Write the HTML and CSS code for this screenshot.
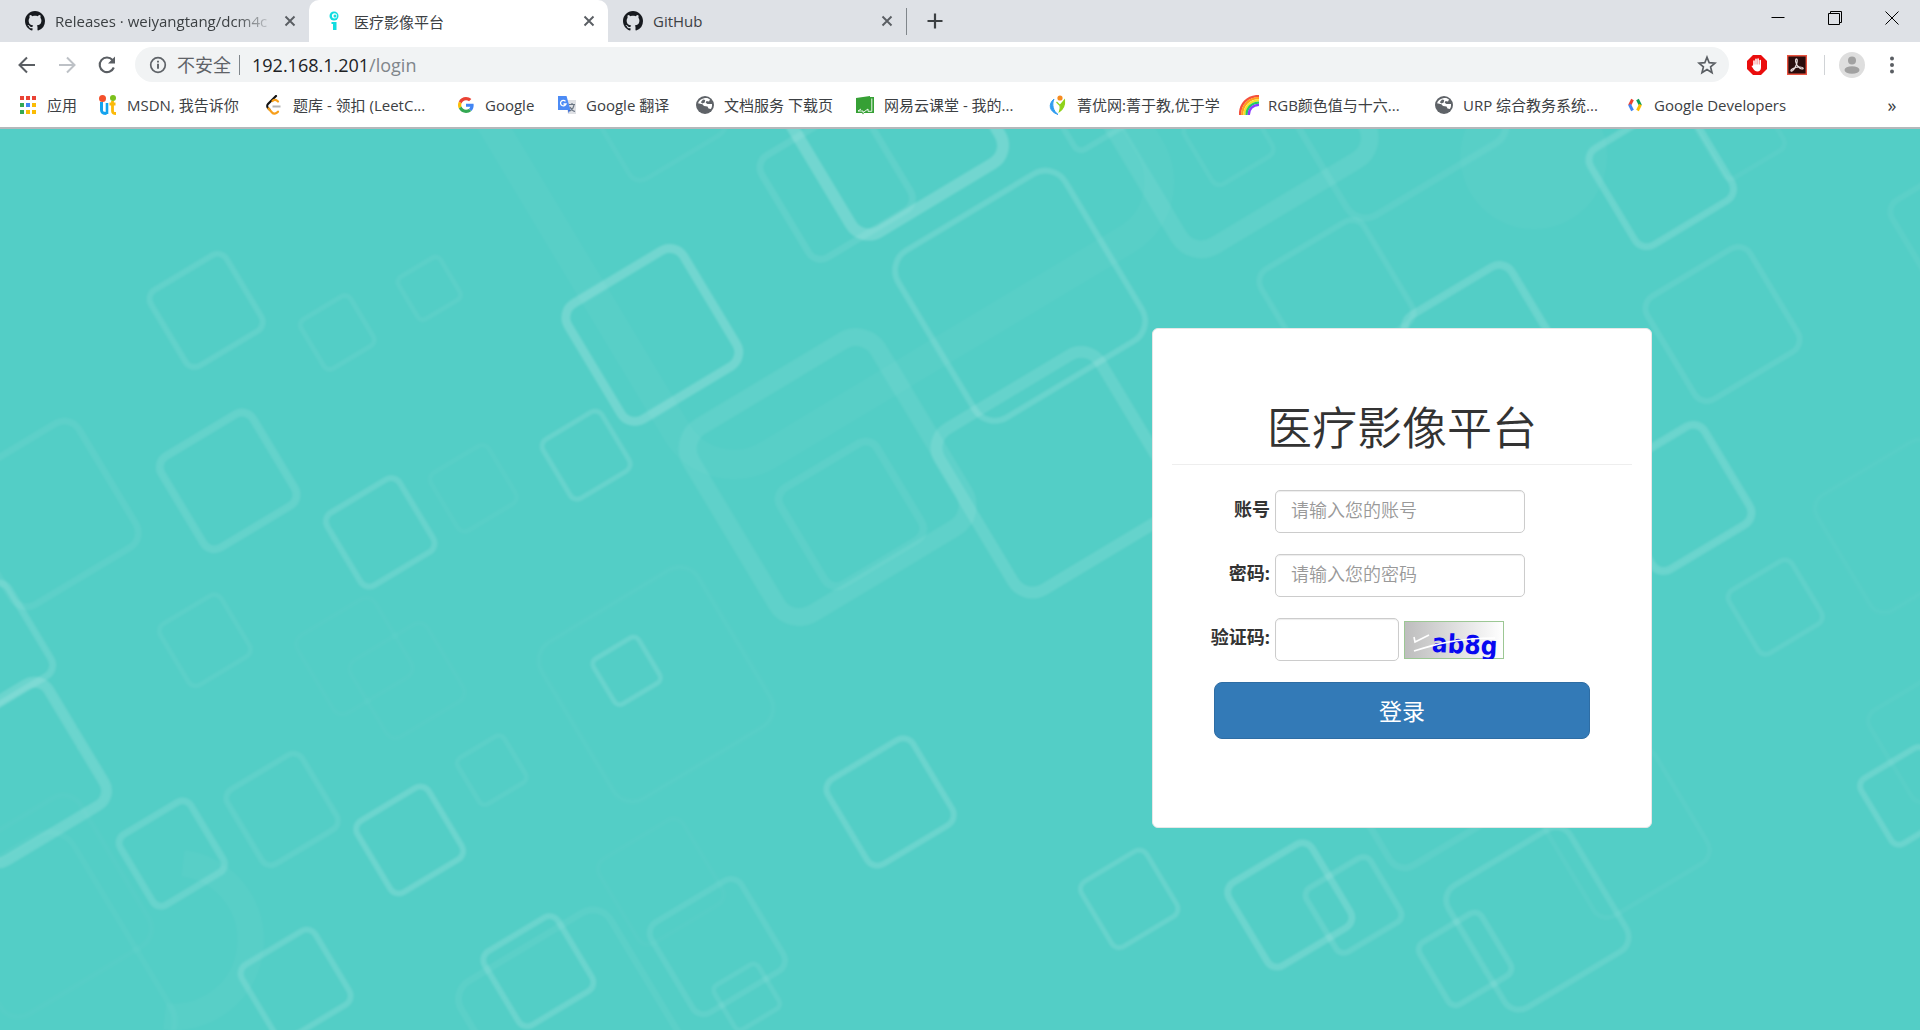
FILE: index.html
```html
<!DOCTYPE html>
<html lang="zh-CN">
<head>
<meta charset="utf-8">
<meta name="viewport" content="width=device-width, initial-scale=1">
<title>医疗影像平台</title>
<link rel="stylesheet" href="styles.css">
</head>
<body>
<svg class="defs" aria-hidden="true">
  <defs>
    <symbol id="github" viewBox="0 0 16 16"><path fill="#171a1f" d="M8 0C3.58 0 0 3.58 0 8c0 3.54 2.29 6.53 5.47 7.59.4.07.55-.17.55-.38 0-.19-.01-.82-.01-1.49-2.01.37-2.53-.49-2.69-.94-.09-.23-.48-.94-.82-1.13-.28-.15-.68-.52-.01-.53.63-.01 1.08.58 1.23.82.72 1.21 1.87.87 2.33.66.07-.52.28-.87.51-1.07-1.78-.2-3.64-.89-3.64-3.95 0-.87.31-1.59.82-2.15-.08-.2-.36-1.02.08-2.12 0 0 .67-.21 2.2.82.64-.18 1.32-.27 2-.27s1.36.09 2 .27c1.53-1.04 2.2-.82 2.2-.82.44 1.1.16 1.92.08 2.12.51.56.82 1.27.82 2.15 0 3.07-1.87 3.75-3.65 3.95.29.25.54.73.54 1.48 0 1.07-.01 1.93-.01 2.2 0 .21.15.46.55.38A8.01 8.01 0 0 0 16 8c0-4.42-3.58-8-8-8z"/></symbol>
    <symbol id="cross" viewBox="0 0 12 12"><path d="M1.500 1.500l9 9M10.500 1.500l-9 9" fill="none" stroke="#5a5e63" stroke-width="1.900"/></symbol>
    <symbol id="globe" viewBox="0 0 20 20"><circle cx="10" cy="10" r="9" fill="#5f6368"/><path d="M9 3.300c2.500-.8 4.500-.3 6 1.200l-1 2-2.500-.4-.8 1.700 1.800 1.200H17c.3 2-.2 3.800-1.200 5l-2.300-.4-1-2.200-3.500-.4-1.600-1.800L3 8.200C3.800 5.800 6 4 9 3.300z" fill="#fff"/><path d="M8 4.500l2.200.4-.5 2.600-2.200 1-1.700-1.300zM4 11.500l3 .8 1.800 2.200-.8 2C5.800 15.800 4.500 14 4 11.500z" fill="#5f6368"/></symbol>
    <rect id="tile" x="-50" y="-50" width="100" height="100" rx="12" fill="none" stroke="#fff" vector-effect="non-scaling-stroke"/>
  </defs>
</svg>

<header class="browser">
  <div class="tabstrip">
    <div class="tab">
      <svg class="icon"><use href="#github"/></svg>
      <span class="tab-title faded">Releases · weiyangtang/dcm4c</span>
      <button class="tab-close" aria-label="关闭"><svg><use href="#cross"/></svg></button>
    </div>
    <div class="tab active">
      <svg class="icon" viewBox="0 0 20 20"><circle cx="10" cy="5" r="4.500" fill="#12dce0"/><circle cx="10.500" cy="4.800" r="2.600" fill="#fff"/><circle cx="11" cy="5" r="1.500" fill="#12dce0"/><path d="M7.500 11h5v8h-3.500v-6h-1.500z" fill="#12dce0"/></svg>
      <span class="tab-title">医疗影像平台</span>
      <button class="tab-close" aria-label="关闭"><svg><use href="#cross"/></svg></button>
    </div>
    <div class="tab last">
      <svg class="icon"><use href="#github"/></svg>
      <span class="tab-title">GitHub</span>
      <button class="tab-close" aria-label="关闭"><svg><use href="#cross"/></svg></button>
    </div>
    <button class="new-tab" aria-label="新标签页"><svg viewBox="0 0 16 16"><path d="M8 .5v15M.5 8h15" stroke="#3c4043" stroke-width="2.200"/></svg></button>
    <div class="window-controls">
      <button aria-label="最小化"><svg viewBox="0 0 14 14"><path d="M.5 6.500h13" stroke="#000"/></svg></button>
      <button aria-label="还原"><svg viewBox="0 0 14 14"><path d="M.5 2.500h11v11h-11zM2.500 2.500v-2h11v11h-2" fill="none" stroke="#000"/></svg></button>
      <button aria-label="关闭窗口"><svg viewBox="0 0 14 14"><path d="M.5.5l13 13M13.500.5l-13 13" stroke="#000"/></svg></button>
    </div>
  </div>

  <div class="toolbar">
    <button class="nav" aria-label="后退"><svg viewBox="0 0 20 20"><path d="M18 10H3M10 2.500L2.500 10l7.500 7.500" fill="none" stroke="#5a5e63" stroke-width="2"/></svg></button>
    <button class="nav" aria-label="前进"><svg viewBox="0 0 20 20"><path d="M2 10h15M10 2.500l7.500 7.500-7.500 7.500" fill="none" stroke="#bdc1c6" stroke-width="2"/></svg></button>
    <button class="nav" aria-label="重新加载"><svg viewBox="0 0 20 20"><path d="M16.800 12.500A7.300 7.300 0 1 1 15.500 5" fill="none" stroke="#5a5e63" stroke-width="2.100"/><path d="M18 1.500v7h-7z" fill="#5a5e63"/></svg></button>
    <div class="omnibox">
      <svg class="info" viewBox="0 0 18 18"><circle cx="9" cy="9" r="7.300" fill="none" stroke="#5f6368" stroke-width="1.700"/><path d="M9 7.800v5M9 4.700v1.900" stroke="#5f6368" stroke-width="1.900"/></svg>
      <span class="insecure">不安全</span>
      <span class="omni-sep"></span>
      <span class="url">192.168.1.201<span class="path">/login</span></span>
      <button class="star" aria-label="收藏"><svg viewBox="0 0 20 20"><path d="M10 2.200l2.200 5.500 5.900.4-4.500 3.800 1.400 5.800-5-3.200-5 3.200 1.400-5.800L1.900 8.100l5.900-.4z" fill="none" stroke="#5a5e63" stroke-width="1.700"/></svg></button>
    </div>
    <div class="extensions">
      <button aria-label="广告拦截"><svg viewBox="0 0 20 20"><path d="M6 0h8l6 6v8l-6 6H6l-6-6V6z" fill="#ea0d0d"/><path d="M7 11V6M9 10V4.200M11.100 10V4M13.200 11V5.500" stroke="#fff" stroke-width="1.600" stroke-linecap="round"/><path d="M6.200 9.500H14v3c0 2.600-1.500 4-3.600 4-1.900 0-3-1-4-2.500L4.500 11l1-.6.7.6z" fill="#fff"/></svg></button>
      <button aria-label="Acrobat"><svg viewBox="0 0 20 20"><path d="M.7.700h18.600v18.600H.7z" fill="#2a0c0c" stroke="#e8523f" stroke-width="1.400"/><path d="M9 4c2-.5 1.200 3.500.3 5.800C8.200 12.800 5.500 17 4 16c-1.200-1.500 5-4.200 9-4 3.500.2 4 2.200 2 2-3-.3-6-5-6.400-7.500C8.500 5 8.500 4.300 9 4z" fill="none" stroke="#e8dada" stroke-width="1.200"/></svg></button>
      <span class="tool-sep"></span>
      <button aria-label="用户"><svg class="avatar" viewBox="0 0 26 26"><circle cx="13" cy="13" r="13" fill="#dedede"/><circle cx="13" cy="8.500" r="4" fill="#a1a1a1"/><ellipse cx="13" cy="18" rx="7.500" ry="3.800" fill="#a1a1a1"/></svg></button>
      <button aria-label="菜单"><svg viewBox="0 0 20 20"><g fill="#5a5e63"><circle cx="10" cy="3.500" r="2"/><circle cx="10" cy="10" r="2"/><circle cx="10" cy="16.500" r="2"/></g></svg></button>
    </div>
  </div>

  <nav class="bookmarks">
    <a href="#"><svg class="icon" viewBox="0 0 20 20"><path d="M2 1h4v4H2zM8 1h4v4H8zM14 1h4v4h-4z" fill="#ea4335"/><path d="M2 8h4v4H2zM2 15h4v4H2z" fill="#34a853"/><path d="M8 8h4v4H8z" fill="#4285f4"/><path d="M14 8h4v4h-4zM8 15h4v4H8zM14 15h4v4h-4z" fill="#fbbc05"/></svg>应用</a>
    <a href="#"><svg class="icon" viewBox="0 0 20 20"><circle cx="4.500" cy="3.500" r="3.500" fill="#f4512c"/><circle cx="15" cy="3" r="3" fill="#7cc11c"/><path d="M3.500 7v8c0 3 1.500 3.500 5 3.500" fill="none" stroke="#15a3ee" stroke-width="3"/><path d="M9 8v11" stroke="#15a3ee" stroke-width="2.600"/><path d="M14.500 6v10c0 2 1 2.500 3.500 2.500M11.500 9h6" fill="none" stroke="#fbba09" stroke-width="2.800"/></svg>MSDN, 我告诉你</a>
    <a href="#"><svg class="icon" viewBox="0 0 20 20"><path d="M12 1L4 9c-1 1-1 3 0 4l1.500 1.500" fill="none" stroke="#111" stroke-width="2.200" stroke-linecap="round"/><path d="M14 6.500c-2-2-4-2-5.500-.5M4.500 13.500l3.500 4c1.500 1.700 4 1.500 6-.8" fill="none" stroke="#f79f1b" stroke-width="2.200" stroke-linecap="round"/><path d="M8.500 11.500h8" stroke="#b3b3b3" stroke-width="2"/></svg>题库 - 领扣 (LeetC...</a>
    <a href="#"><svg class="icon" viewBox="-6 -6 60 60"><path fill="#EA4335" d="M24 9.500c3.540 0 6.710 1.220 9.210 3.600l6.850-6.850C35.900 2.380 30.470 0 24 0 14.620 0 6.510 5.380 2.560 13.220l7.980 6.190C12.430 13.720 17.740 9.500 24 9.500z"/><path fill="#4285F4" d="M46.980 24.550c0-1.570-.15-3.090-.38-4.550H24v9.020h12.940c-.58 2.960-2.260 5.480-4.780 7.180l7.730 6c4.510-4.180 7.090-10.360 7.090-17.650z"/><path fill="#FBBC05" d="M10.530 28.590c-.48-1.450-.76-2.990-.76-4.590s.27-3.140.76-4.590l-7.980-6.190C.92 16.460 0 20.120 0 24s.92 7.540 2.560 10.780l7.970-6.190z"/><path fill="#34A853" d="M24 48c6.480 0 11.930-2.130 15.890-5.810l-7.730-6c-2.150 1.450-4.920 2.300-8.160 2.300-6.260 0-11.570-4.220-13.470-9.910l-7.980 6.190C6.510 42.620 14.620 48 24 48z"/></svg>Google</a>
    <a href="#"><svg class="icon" viewBox="0 0 20 20"><path d="M8 5h11v14h-8z" fill="#dfe1e5"/><path d="M1 1h8.500l4 14H1z" fill="#4c8bf5"/><path d="M11 15h2.500l-2 3z" fill="#3367d6"/><path d="M8.500 6.300A2.800 2.800 0 1 0 9 9H6.500" fill="none" stroke="#fff" stroke-width="1.300"/><path d="M12 9.500h6M15 8v1.500M17 10c-.5 3-2 5-4 6M13 12c1 2 3 4 5 4.500" fill="none" stroke="#6b7683" stroke-width="1.200"/></svg>Google 翻译</a>
    <a href="#"><svg class="icon"><use href="#globe"/></svg>文档服务 下载页</a>
    <a href="#"><svg class="icon" viewBox="0 0 20 20"><path d="M1 3l14-2v1h4v16H9l-1 1.500L7 18H1z" fill="#36a035"/><path d="M16.800 3.500v12.800H13V14l-5 3.500V16H3l3-2" fill="none" stroke="#fff" stroke-width=".9"/></svg>网易云课堂 - 我的...</a>
    <a href="#"><svg class="icon" viewBox="0 0 20 20"><circle cx="12" cy="3" r="2.600" fill="#f68b1f"/><path d="M6 4C0 9 1 16.500 10 19.500 5 16 3.500 9 6 4z" fill="#2f9df0" stroke="#2f9df0"/><path d="M8.500 7l3.500 3.500 4.500-5.500c.5 5-1.500 9-5 11.500 1-3 1-4.500.5-6" fill="#8fd21a" stroke="#8fd21a" stroke-width="1.200"/></svg>菁优网:菁于教,优于学</a>
    <a href="#"><svg class="icon" viewBox="0 0 20 20"><g fill="none" stroke-width="2.300"><path d="M1 20C1 9 8 1 20 1" stroke="#f4503c"/><path d="M3.200 20C3.200 10 10 3.200 20 3.200" stroke="#ffa01c"/><path d="M5.400 20C5.400 12 11.500 5.400 20 5.400" stroke="#f4e325"/><path d="M7.600 20c0-7 5-12.400 12.400-12.400" stroke="#25cc63"/><path d="M9.800 20c0-6 4-10.200 10.200-10.200" stroke="#8b3dff"/></g></svg>RGB颜色值与十六...</a>
    <a href="#"><svg class="icon"><use href="#globe"/></svg>URP 综合教务系统...</a>
    <a href="#"><svg class="icon" viewBox="0 0 20 20"><g fill="none" stroke-width="2.900"><path d="M7.500 4.500L4.500 10.500" stroke="#ea4335"/><path d="M4.500 9.500l3 6" stroke="#4285f4"/><path d="M12.500 4.500l3 6" stroke="#0f9d58"/><path d="M15.500 9.500l-3 6" stroke="#fbbc05"/></g></svg>Google Developers</a>
    <button class="more" aria-label="更多书签">»</button>
  </nav>
</header>

<main class="page">
  <svg class="backdrop" viewBox="0 106 1568 735" preserveAspectRatio="xMidYMin slice" aria-hidden="true">
    <g class="haze">
      <circle cx="1252" cy="128" r="60" fill="#fff" opacity=".03"/>
      <path d="M150 705a62 62 0 0 1-15 125" fill="none" stroke="#fff" stroke-width="22" opacity=".03"/>
      <use href="#tile" transform="translate(658 91) rotate(-31) scale(4.500)" stroke-width="30" opacity=".03"/>
      <use href="#tile" transform="translate(169 254) rotate(-31) scale(.72)" stroke-width="6" opacity=".09"/>
      <use href="#tile" transform="translate(276 272) rotate(-31) scale(.47)" stroke-width="5" opacity=".06"/>
      <use href="#tile" transform="translate(351 236) rotate(-31) scale(.4)" stroke-width="5" opacity=".05"/>
      <use href="#tile" transform="translate(38 420) rotate(-31) scale(1.180)" stroke-width="7" opacity=".06"/>
      <use href="#tile" transform="translate(187 393) rotate(-31) scale(.87)" stroke-width="8" opacity=".1"/>
      <use href="#tile" transform="translate(311 435) rotate(-31) scale(.69)" stroke-width="6" opacity=".12"/>
      <use href="#tile" transform="translate(387 399) rotate(-31) scale(.55)" stroke-width="5" opacity=".03"/>
      <use href="#tile" transform="translate(479 372) rotate(-31) scale(.56)" stroke-width="5" opacity=".12"/>
      <use href="#tile" transform="translate(533 274) rotate(-31) scale(1.100)" stroke-width="9" opacity=".18"/>
      <use href="#tile" transform="translate(728 101) rotate(-31) scale(1.420)" stroke-width="12" opacity=".18"/>
      <use href="#tile" transform="translate(683 150) rotate(-31) scale(.97)" stroke-width="7" opacity=".08"/>
      <use href="#tile" transform="translate(833 242) rotate(-31) scale(1.590)" stroke-width="6" opacity=".13"/>
      <use href="#tile" transform="translate(676 390) rotate(-31) scale(1.780)" stroke-width="18" opacity=".07"/>
      <use href="#tile" transform="translate(695 420) rotate(-31) scale(.92)" stroke-width="8" opacity=".06"/>
      <use href="#tile" transform="translate(863 386) rotate(-31) scale(1.530)" stroke-width="12" opacity=".11"/>
      <use href="#tile" transform="translate(512 548) rotate(-31) scale(.43)" stroke-width="5" opacity=".13"/>
      <use href="#tile" transform="translate(727 655) rotate(-31) scale(.81)" stroke-width="6" opacity=".14"/>
      <use href="#tile" transform="translate(922 734) rotate(-31) scale(.62)" stroke-width="5" opacity=".12"/>
      <use href="#tile" transform="translate(586 773) rotate(-31) scale(.86)" stroke-width="6" opacity=".08"/>
      <use href="#tile" transform="translate(610 814) rotate(-31) scale(.42)" stroke-width="5" opacity=".08"/>
      <use href="#tile" transform="translate(168 523) rotate(-31) scale(.58)" stroke-width="5" opacity=".05"/>
      <use href="#tile" transform="translate(-12 532) rotate(-31) scale(.87)" stroke-width="7" opacity=".12"/>
      <use href="#tile" transform="translate(14 631) rotate(-31) scale(1.150)" stroke-width="11" opacity=".14"/>
      <use href="#tile" transform="translate(141 697) rotate(-31) scale(.67)" stroke-width="7" opacity=".12"/>
      <use href="#tile" transform="translate(231 661) rotate(-31) scale(.71)" stroke-width="6" opacity=".07"/>
      <use href="#tile" transform="translate(335 686) rotate(-31) scale(.68)" stroke-width="6" opacity=".15"/>
      <use href="#tile" transform="translate(402 629) rotate(-31) scale(.44)" stroke-width="5" opacity=".05"/>
      <use href="#tile" transform="translate(242 804) rotate(-31) scale(.7)" stroke-width="6" opacity=".13"/>
      <use href="#tile" transform="translate(440 793) rotate(-31) scale(.7)" stroke-width="6" opacity=".14"/>
      <use href="#tile" transform="translate(466 834) rotate(-31) scale(1.420)" stroke-width="7" opacity=".05"/>
      <use href="#tile" transform="translate(290 536) rotate(-31) scale(.74)" stroke-width="5" opacity=".02"/>
      <use href="#tile" transform="translate(333 556) rotate(-31) scale(.73)" stroke-width="5" opacity=".02"/>
      <use href="#tile" transform="translate(536 559) rotate(-31) scale(1.490)" stroke-width="6" opacity=".022"/>
      <use href="#tile" transform="translate(540 720) rotate(-31) scale(.8)" stroke-width="5" opacity=".02"/>
      <use href="#tile" transform="translate(15 808) rotate(-31) scale(2)" stroke-width="6" opacity=".03"/>
      <use href="#tile" transform="translate(34 740) rotate(-31) scale(1.410)" stroke-width="6" opacity=".02"/>
      <use href="#tile" transform="translate(535 90) rotate(-31) scale(.9)" stroke-width="5" opacity=".04"/>
      <use href="#tile" transform="translate(1004 90) rotate(-31) scale(1.780)" stroke-width="18" opacity=".07"/>
      <use href="#tile" transform="translate(1003 115) rotate(-31) scale(.57)" stroke-width="5" opacity=".05"/>
      <use href="#tile" transform="translate(890 88) rotate(-31) scale(.55)" stroke-width="6" opacity=".08"/>
      <use href="#tile" transform="translate(1091 243) rotate(-31) scale(.98)" stroke-width="6" opacity=".07"/>
      <use href="#tile" transform="translate(1134 83) rotate(-31) scale(1.490)" stroke-width="7" opacity=".06"/>
      <use href="#tile" transform="translate(1211 281) rotate(-31) scale(1)" stroke-width="8" opacity=".14"/>
      <use href="#tile" transform="translate(1356 143) rotate(-31) scale(.92)" stroke-width="7" opacity=".14"/>
      <use href="#tile" transform="translate(1406 265) rotate(-31) scale(.98)" stroke-width="6" opacity=".08"/>
      <use href="#tile" transform="translate(1420 110) rotate(-31) scale(.57)" stroke-width="5" opacity=".04"/>
      <use href="#tile" transform="translate(1600 185) rotate(-31) scale(.89)" stroke-width="6" opacity=".05"/>
      <use href="#tile" transform="translate(1370 407) rotate(-31) scale(.93)" stroke-width="8" opacity=".14"/>
      <use href="#tile" transform="translate(1449 496) rotate(-31) scale(.6)" stroke-width="5" opacity=".08"/>
      <use href="#tile" transform="translate(1558 650) rotate(-31) scale(.62)" stroke-width="6" opacity=".14"/>
      <use href="#tile" transform="translate(1580 600) rotate(-31) scale(.86)" stroke-width="5" opacity=".03"/>
      <use href="#tile" transform="translate(1552 430) rotate(-31) scale(1.100)" stroke-width="6" opacity=".025"/>
      <use href="#tile" transform="translate(1053 739) rotate(-31) scale(.79)" stroke-width="7" opacity=".15"/>
      <use href="#tile" transform="translate(1105 739) rotate(-31) scale(.61)" stroke-width="6" opacity=".1"/>
      <use href="#tile" transform="translate(1196 783) rotate(-31) scale(.59)" stroke-width="6" opacity=".1"/>
      <use href="#tile" transform="translate(1255 750) rotate(-31) scale(1.160)" stroke-width="6" opacity=".1"/>
      <use href="#tile" transform="translate(1162 633) rotate(-31) scale(1.180)" stroke-width="7" opacity=".06"/>
      <use href="#tile" transform="translate(1326 680) rotate(-31) scale(1.080)" stroke-width="5" opacity=".04"/>
    </g>
  </svg>

  <section class="card">
    <h1>医疗影像平台</h1>
    <form>
      <div class="row">
        <label for="account">账号</label>
        <input id="account" class="field" type="text" placeholder="请输入您的账号">
      </div>
      <div class="row">
        <label for="password">密码:</label>
        <input id="password" class="field" type="password" placeholder="请输入您的密码">
      </div>
      <div class="row">
        <label for="code">验证码:</label>
        <input id="code" class="field short" type="text">
        <svg class="captcha" viewBox="0 0 100 38" role="img" aria-label="验证码图片">
          <defs><linearGradient id="fade"><stop offset="0" stop-color="#bdbdbd"/><stop offset="1" stop-color="#fff"/></linearGradient></defs>
          <rect x=".5" y=".5" width="99" height="37" fill="url(#fade)" stroke="#9cc794"/>
          <text class="captcha-text" x="28" y="32" transform="rotate(3 50 20)">ab8g</text>
          <path d="M10 16l1 5 14-7M10 30C32 23 55 17 91 17" fill="none" stroke="#fff" stroke-width="1.600"/>
        </svg>
      </div>
      <button class="submit" type="button">登录</button>
    </form>
  </section>
</main>
</body>
</html>
```
FILE: styles.css
```css
* {
  box-sizing: border-box;
}

body {
  margin: 0;
  min-height: 100vh;
  display: flex;
  flex-direction: column;
  font-family: "Open Sans", "Noto Sans CJK SC", sans-serif;
  font-size: 15px;
  color: #3c4043;
}

button {
  margin: 0;
  padding: 0;
  border: 0;
  background: none;
  font: inherit;
  color: inherit;
}

a {
  color: inherit;
  text-decoration: none;
}

.defs {
  position: absolute;
  width: 0;
  height: 0;
}

.icon {
  width: 20px;
  height: 20px;
  flex: none;
}

/* Browser window */

.browser {
  background: #fff;
  border-bottom: 2px solid #b4b8bb;
}

.tabstrip {
  display: flex;
  height: 42px;
  padding-left: 10px;
  background: #dee1e6;
}

.tab {
  display: flex;
  align-items: center;
  gap: 10px;
  width: 299px;
  padding: 0 13px 0 15px;
}

.tab.active {
  background: #fff;
  border-radius: 10px 10px 0 0;
}

.tab.last {
  border-right: 1px solid transparent;
  border-image: linear-gradient(transparent 9px, #80868b 9px, #80868b 34px, transparent 34px) 1;
}

.tab-title {
  flex: 1;
  overflow: hidden;
  white-space: nowrap;
}

.faded {
  mask-image: linear-gradient(90deg, #000 180px, transparent 220px);
}

.tab-close {
  display: flex;
}

.tab-close svg {
  width: 12px;
  height: 12px;
}

.new-tab {
  display: flex;
  align-items: center;
  padding: 0 20px;
}

.new-tab svg {
  width: 16px;
  height: 16px;
}

.window-controls {
  display: flex;
  height: 36px;
  margin-left: auto;
}

.window-controls button {
  display: grid;
  place-items: center;
  width: 57px;
}

.window-controls svg {
  width: 14px;
  height: 14px;
}

.toolbar {
  display: flex;
  align-items: center;
  height: 45px;
  padding: 0 8px 0 7px;
}

.nav {
  display: grid;
  place-items: center;
  width: 40px;
}

.nav svg {
  width: 20px;
  height: 20px;
}

.omnibox {
  flex: 1;
  display: flex;
  align-items: center;
  height: 35px;
  margin-left: 8px;
  padding: 0 12px 0 14px;
  border-radius: 18px;
  background: #f1f3f4;
  font-size: 18px;
  line-height: 24px;
}

.info {
  width: 18px;
  height: 18px;
  margin-right: 10px;
}

.insecure {
  color: #5f6368;
}

.omni-sep {
  width: 1px;
  height: 20px;
  margin: 0 12px 0 8px;
  background: #80868b;
}

.url {
  flex: 1;
  color: #202124;
}

.path {
  color: #80868b;
}

.star {
  display: flex;
}

.star svg,
.extensions svg {
  display: block;
  width: 20px;
  height: 20px;
}

.extensions {
  display: flex;
  align-items: center;
  padding-left: 8px;
}

.extensions button {
  display: grid;
  place-items: center;
  width: 40px;
}

.extensions .avatar {
  width: 26px;
  height: 26px;
}

.tool-sep {
  width: 1px;
  height: 20px;
  margin: 0 7px;
  background: #d0d3d6;
}

.bookmarks {
  display: grid;
  grid-template-columns: 80px 166px 192px 101px 138px 160px 193px 191px 195px 191px 1fr 40px;
  align-items: center;
  height: 40px;
  padding: 0 8px 4px 18px;
}

.bookmarks a {
  display: flex;
  align-items: center;
  gap: 9px;
  line-height: 20px;
  white-space: nowrap;
}

.more {
  font-size: 18px;
  line-height: 20px;
}

/* Login page */

.page {
  position: relative;
  flex: 1;
  padding: 199px 0 60px;
  overflow: hidden;
  background: #53cec6;
}

.backdrop {
  position: absolute;
  inset: 0;
  width: 100%;
  height: 100%;
}

.haze {
  filter: blur(1px);
}

.card {
  position: relative;
  width: 500px;
  min-height: 500px;
  margin-left: 60%;
  padding: 71px 19px 0;
  border: 1px solid #e7e7e7;
  border-radius: 6px;
  background: #fff;
  color: #333;
}

h1 {
  margin: 0 0 25px;
  padding-bottom: 8px;
  border-bottom: 1px solid #eee;
  font-size: 45px;
  font-weight: 350;
  line-height: 56px;
  text-align: center;
}

form {
  display: flex;
  flex-direction: column;
  gap: 21px;
}

.row {
  display: flex;
  align-items: center;
  gap: 5px;
  height: 43px;
}

label {
  width: 98px;
  padding-bottom: 5px;
  font-size: 18px;
  font-weight: 700;
  line-height: 24px;
  text-align: right;
}

.field {
  width: 250px;
  height: 43px;
  padding: 0 15px 3px;
  border: 1px solid #ccc;
  border-radius: 5px;
  box-shadow: inset 0 1px 1px rgba(0, 0, 0, 0.075);
  background: #fff;
  font-family: inherit;
  font-size: 18px;
  color: #555;
}

.field::placeholder {
  color: #999;
  font-weight: 350;
  opacity: 1;
}

.field.short {
  width: 124px;
}

.captcha {
  width: 100px;
  height: 38px;
}

.captcha-text {
  font: 700 26px "Liberation Sans Narrow", "DejaVu Sans Condensed", sans-serif;
  fill: #0808f0;
}

.submit {
  width: 376px;
  height: 57px;
  margin: 0 auto;
  padding-bottom: 2px;
  border: 1px solid #2e6da4;
  border-radius: 8px;
  background: #337ab7;
  color: #fff;
  font-size: 23px;
}
```
